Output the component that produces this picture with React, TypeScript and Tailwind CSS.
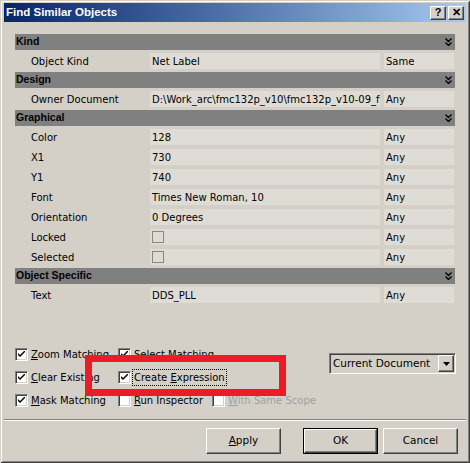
import React from 'react';

type Row = { label: string; value?: string; match: string; box?: boolean };
type Section = { title: string; rows: Row[] };

const SECTIONS: Section[] = [
  { title: 'Kind', rows: [{ label: 'Object Kind', value: 'Net Label', match: 'Same' }] },
  {
    title: 'Design',
    rows: [{ label: 'Owner Document', value: 'D:\\Work_arc\\fmc132p_v10\\fmc132p_v10-09_f', match: 'Any' }],
  },
  {
    title: 'Graphical',
    rows: [
      { label: 'Color', value: '128', match: 'Any' },
      { label: 'X1', value: '730', match: 'Any' },
      { label: 'Y1', value: '740', match: 'Any' },
      { label: 'Font', value: 'Times New Roman, 10', match: 'Any' },
      { label: 'Orientation', value: '0 Degrees', match: 'Any' },
      { label: 'Locked', box: true, match: 'Any' },
      { label: 'Selected', box: true, match: 'Any' },
    ],
  },
  { title: 'Object Specific', rows: [{ label: 'Text', value: 'DDS_PLL', match: 'Any' }] },
];

function Collapse() {
  return (
    <svg width="7" height="8" viewBox="0 0 7 8" className="mr-[3px]">
      <path d="M0.5 0.5 L3.5 3.5 L6.5 0.5 M0.5 4.5 L3.5 7.5 L6.5 4.5" stroke="#000" strokeWidth="1.4" fill="none" />
    </svg>
  );
}

function Check({ checked }: { checked?: boolean }) {
  return (
    <span className="flex h-[13px] w-[13px] shrink-0 items-center justify-center border border-t-[#808080] border-l-[#808080] border-r-white border-b-white bg-white shadow-[inset_1px_1px_0_#404040,inset_-1px_-1px_0_#d4d0c8]">
      {checked && (
        <svg width="7" height="7" viewBox="0 0 7 7">
          <path d="M0 2 L0 4 L2 6 L7 1 L7 -1 L2 4 Z" fill="#000" />
        </svg>
      )}
    </span>
  );
}

function Option({ children, checked, disabled, focused, width }: { children: React.ReactNode; checked?: boolean; disabled?: boolean; focused?: boolean; width: string }) {
  return (
    <div className={`flex items-center ${width}`}>
      <Check checked={checked} />
      <span
        className={`ml-[2px] whitespace-nowrap px-[1px] leading-[15px] ${disabled ? 'text-[#a0a0a0]' : 'text-black'} ${
          focused ? 'outline outline-1 outline-dotted outline-black' : ''
        }`}
      >
        {children}
      </span>
    </div>
  );
}

function Button({ children, primary, className = '' }: { children: React.ReactNode; primary?: boolean; className?: string }) {
  return (
    <div className={`h-[26px] w-[75px] ${primary ? 'border border-black' : ''} ${className}`}>
      <div className="flex h-full w-full items-center justify-center border border-t-white border-l-white border-r-[#404040] border-b-[#404040] text-black shadow-[inset_-1px_-1px_0_#808080]">
        {children}
      </div>
    </div>
  );
}

export default function App() {
  return (
    <div className="relative h-[463px] w-[470px] bg-[#d4d0c8] px-[4px] pt-[3px] font-['DejaVu_Sans',sans-serif] text-[10px] text-black shadow-[inset_1px_1px_0_#d4d0c8,inset_-1px_-1px_0_#404040,inset_2px_2px_0_#fff,inset_-2px_-2px_0_#808080]">
      {/* title bar */}
      <div className="flex h-[19px] items-center bg-gradient-to-r from-[#0a246a] to-[#a6caf0] px-[2px]">
        <span className="font-['Liberation_Sans',sans-serif] text-[11.5px] font-bold text-white">Find Similar Objects</span>
        <div className="ml-auto flex gap-[2px]">
          {['?', '✕'].map(c => (
            <div
              key={c}
              className="flex h-[14px] w-[16px] items-center justify-center border border-t-white border-l-white border-r-[#404040] border-b-[#404040] bg-[#d4d0c8] font-['Liberation_Sans',sans-serif] text-[11px] font-bold leading-none shadow-[inset_-1px_-1px_0_#808080]"
            >
              {c}
            </div>
          ))}
        </div>
      </div>

      <div className="px-[11px] pt-[12px]">
        {/* property grid */}
        <div className="w-[440px]">
          {SECTIONS.map(s => (
            <div key={s.title}>
              <div className="flex h-[16px] items-center justify-between bg-[#808080] pl-[1px]">
                <span className="font-['Liberation_Sans',sans-serif] text-[10.5px] font-bold">{s.title}</span>
                <Collapse />
              </div>
              <div className="flex flex-col gap-[4px] py-[3px]">
                {s.rows.map(r => (
                  <div key={r.label} className="flex h-[16px] leading-[17px]">
                    <div className="w-[135px] pl-[16px]">{r.label}</div>
                    <div className="w-[230px] overflow-hidden whitespace-nowrap bg-[#dfdcd6] pl-[2px]">
                      {r.box ? <div className="mt-[2px] h-[12px] w-[12px] border border-[#8a8780]" /> : r.value}
                    </div>
                    <div className="ml-[4px] w-[70px] bg-[#dfdcd6] pl-[2px]">{r.match}</div>
                  </div>
                ))}
              </div>
            </div>
          ))}
        </div>

        {/* options */}
        <div className="mt-[37px] flex items-start">
          <div className="flex flex-col">
            <div className="flex h-[23px] items-center">
              <Option checked width="w-[103px]"><u>Z</u>oom Matching</Option>
              <Option checked width="w-[94px]"><u>S</u>elect Matching</Option>
            </div>
            <div className="flex h-[23px] items-center">
              <Option checked width="w-[103px]"><u>C</u>lear Existing</Option>
              <Option checked focused width="w-[94px]">Create <u>E</u>xpression</Option>
            </div>
            <div className="flex h-[23px] items-center">
              <Option checked width="w-[103px]"><u>M</u>ask Matching</Option>
              <Option width="w-[94px]"><u>R</u>un Inspector</Option>
              <Option disabled width="w-[110px]"><u>W</u>ith Same Scope</Option>
            </div>
          </div>
          <div className="ml-auto mr-[-1px] mt-[10px] flex h-[21px] w-[127px] items-center border border-t-[#808080] border-l-[#808080] border-r-white border-b-white shadow-[inset_1px_1px_0_#404040,inset_-1px_-1px_0_#d4d0c8]">
            <span className="pl-[3px] text-[10.5px] leading-none">Current Document</span>
            <div className="ml-auto mr-[1px] flex h-[17px] w-[16px] items-center justify-center border border-t-white border-l-white border-r-[#404040] border-b-[#404040] shadow-[inset_-1px_-1px_0_#808080]">
              <svg width="7" height="4" viewBox="0 0 7 4">
                <path d="M0 0 H7 L3.5 4 Z" fill="#000" />
              </svg>
            </div>
          </div>
        </div>
      </div>

      <div className="mt-[7px] h-[2px] border-t border-b border-t-[#808080] border-b-white" />

      <div className="mt-[7px] flex justify-end pr-[8px] text-[10.5px]">
        <Button><u>A</u>pply</Button>
        <Button primary className="ml-[22px]">OK</Button>
        <Button className="ml-[5px]">Cancel</Button>
      </div>

      {/* red marker drawn over the options */}
      <div className="pointer-events-none absolute left-[85px] top-[355px] h-[41px] w-[201px] border-[7px] border-[#ed1c24]" />
    </div>
  );
}
